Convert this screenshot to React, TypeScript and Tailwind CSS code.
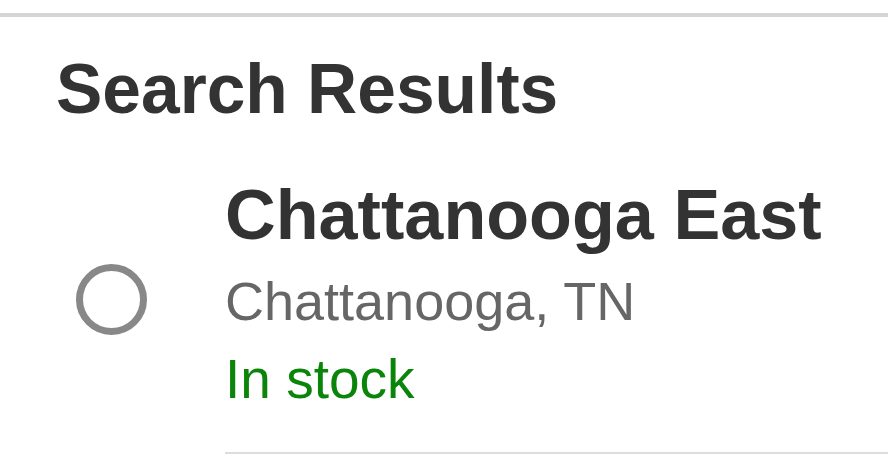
const App = () => {
  return (
    <div className="w-[888px] h-[454px] overflow-hidden bg-white" style={{ fontFamily: '"Liberation Sans", Arial, sans-serif' }}>
      {/* top rule */}
      <div className="mt-[13px] h-[4px] bg-[#d5d5d5]" />

      <h2 className="pl-[56px] pt-[38px] text-[69.5px] leading-none font-bold text-[#333333]">Search Results</h2>

      {/* result row */}
      <label className="mt-[55px] flex cursor-pointer">
        <div className="w-[225px] shrink-0 flex items-start pt-[84px] pl-[76px]">
          <span className="w-[71px] h-[71px] rounded-full border-[7px] border-[#888888]" />
        </div>
        <div className="flex-1 border-b-2 border-[#dddddd] pb-[45.5px]">
          <p className="text-[70.2px] leading-none font-bold text-[#333333]">Chattanooga East</p>
          <p className="mt-[24px] text-[54px] leading-none text-[#666666]">Chattanooga, TN</p>
          <p className="mt-[24px] text-[55px] leading-none text-[#0a850a]">In stock</p>
        </div>
      </label>
    </div>
  )
}

export default App
